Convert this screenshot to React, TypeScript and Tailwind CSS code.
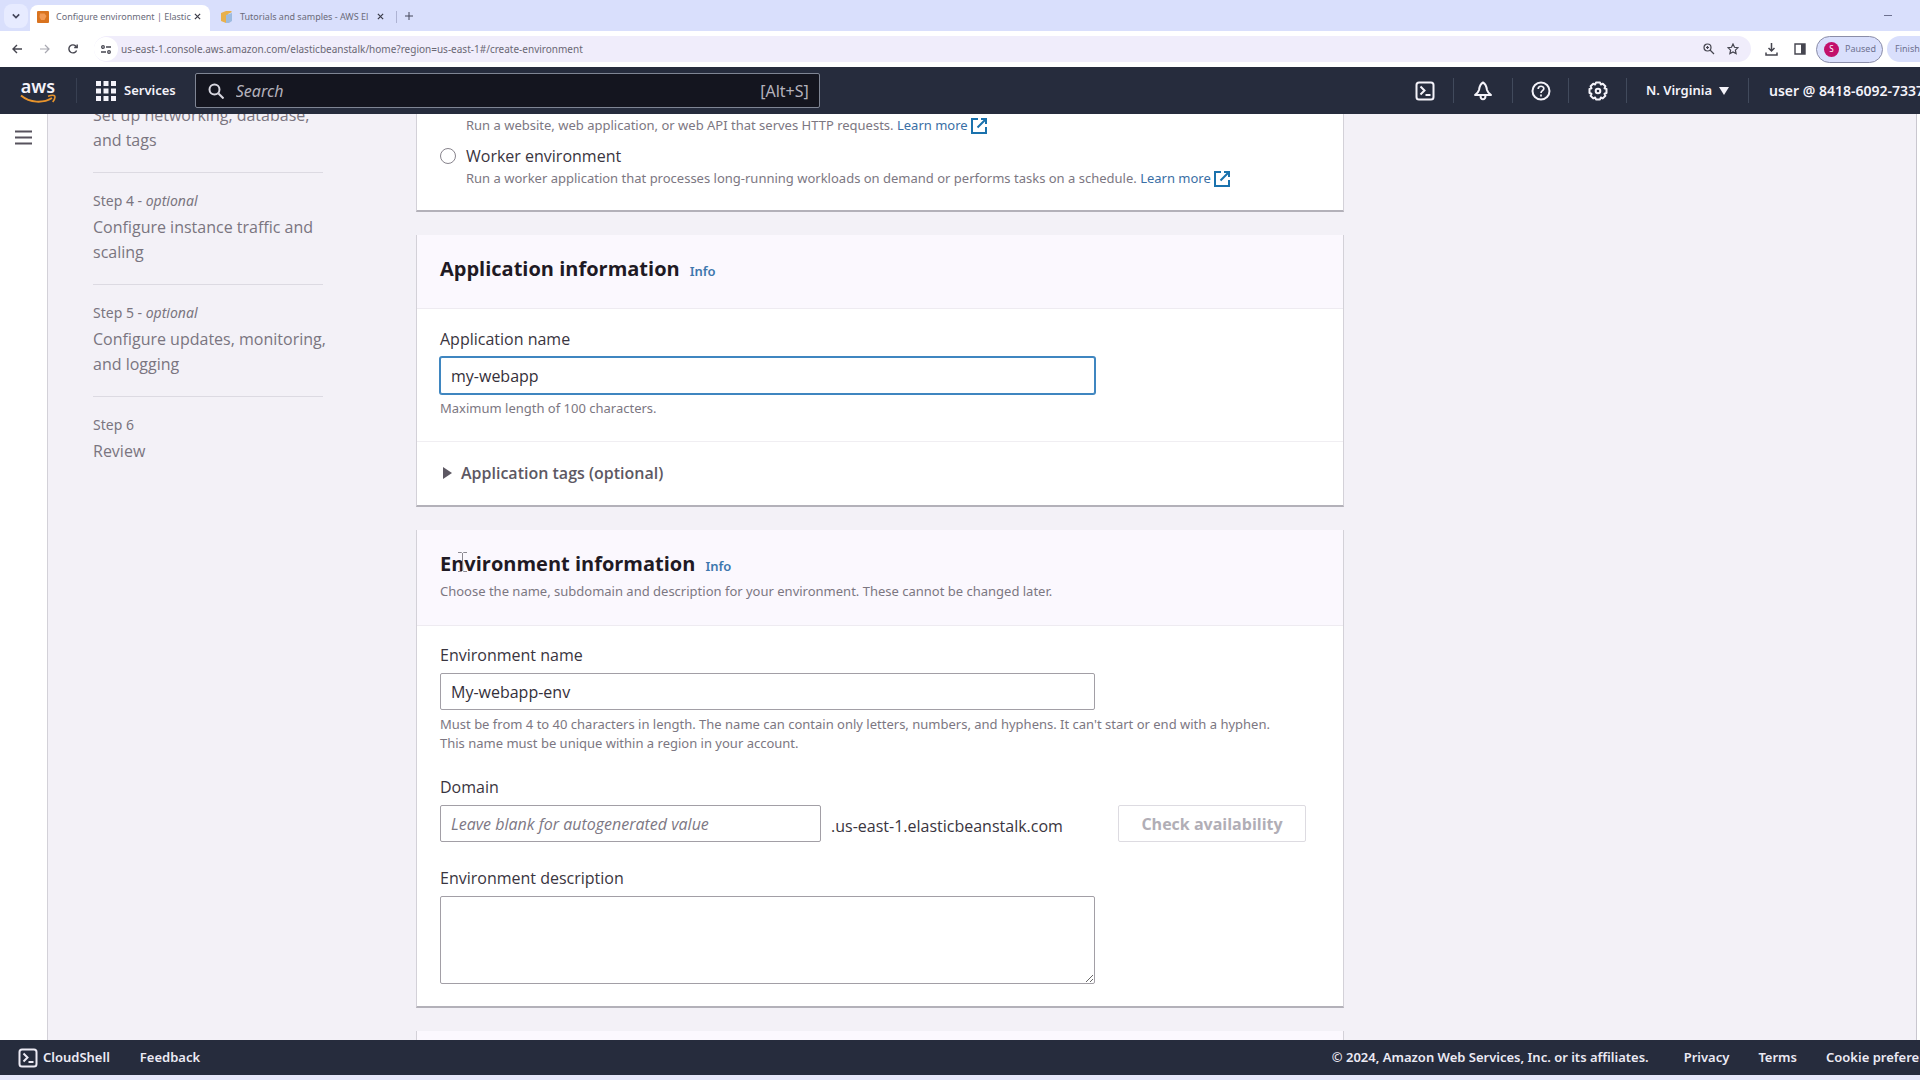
import type { ReactNode } from "react";

const STEPS = [
  { label: "Step 4", optional: true, title: "Configure instance traffic and scaling" },
  { label: "Step 5", optional: true, title: "Configure updates, monitoring, and logging" },
  { label: "Step 6", optional: false, title: "Review" },
];

const iconButton = "flex h-6 items-center justify-center";
const bodyText = "font-['Open_Sans','Noto_Sans',sans-serif] text-[16px]";
const fieldLabel = bodyText + " block leading-6 text-[#3a3540]";
const helpText = "text-[13px] leading-[19px] text-[#7c7782]";
const inputBox =
  bodyText + " block w-full rounded-xs border bg-white px-[10px] text-[#35303a] outline-none";

function CloseIcon() {
  return (
    <svg viewBox="0 0 8 8" className="h-[7px] w-[7px]" stroke="#3b3c4a" strokeWidth="1.4">
      <path d="m1 1 6 6M7 1 1 7" />
    </svg>
  );
}

function ExternalIcon() {
  return (
    <svg viewBox="0 0 16 16" className="inline-block h-4 w-4 align-text-bottom" fill="none" stroke="#1a72ad" strokeWidth="2">
      <path d="M10 1h5v5M15 1 6.500 9.500M7 1H1v14h14V9" />
    </svg>
  );
}

function TerminalIcon() {
  return (
    <svg viewBox="0 0 20 20" className="h-5 w-5" fill="none" stroke="currentColor" strokeWidth="2">
      <rect x="1.500" y="1.500" width="17" height="17" rx="2.500" />
      <path d="M5.500 5.500 9.500 9.500 5.500 13.500M10.500 14h5" />
    </svg>
  );
}

function AwsLogo() {
  return (
    <a href="#home" className="flex w-9 flex-col items-center">
      <span className="text-[18px] leading-4 font-semibold">aws</span>
      <svg viewBox="0 0 36 10" className="h-[10px] w-9" fill="none" stroke="#e8942c" strokeWidth="2">
        <path d="M1 1.500C10 9 23 9.500 32 4" />
        <path d="M28 2.200C31 1.200 34 1 34.700 2c.6 1.200-.4 4-2 6" strokeWidth="1.600" />
      </svg>
    </a>
  );
}

function BrowserTabs() {
  return (
    <div className="flex h-[31px] shrink-0 bg-[#d9dffc] pl-1 text-[9px] text-[#6a6b7a]">
      <button aria-label="Search tabs" className="mt-1 flex h-6 w-6 items-center justify-center rounded-lg bg-[#e7ebff]">
        <svg viewBox="0 0 10 10" className="h-2 w-2" fill="none" stroke="#44465a" strokeWidth="2">
          <path d="m1 3 4 4 4-4" />
        </svg>
      </button>
      <div className="mt-[5px] ml-[2px] flex w-[180px] items-center rounded-t-lg bg-white pr-[9px] pb-[3px] pl-[7px]">
        <svg viewBox="0 0 12 12" className="h-3 w-3 shrink-0">
          <rect width="12" height="12" rx="1" fill="#d9731f" />
          <path d="M3 2.500h4.500l2 2.500-2 4H4L2.500 6z" fill="#f29a55" />
        </svg>
        <span className="ml-[7px] flex-1 whitespace-nowrap">Configure environment | Elastic</span>
        <button aria-label="Close tab">
          <CloseIcon />
        </button>
      </div>
      <div className="mt-[5px] flex w-[187px] items-center pb-[3px] pl-[10px]">
        <svg viewBox="0 0 13 12" className="h-3 w-[13px] shrink-0">
          <path d="M1 2 6 0h5l1 1-4 2v8l-2 1-5-2z" fill="#e8b04c" />
          <path d="M6 4 12 2v8l-3 2H6z" fill="#9dbbe0" />
        </svg>
        <span className="ml-[7px] flex-1 whitespace-nowrap">Tutorials and samples - AWS El</span>
        <button aria-label="Close tab" className="mr-3">
          <CloseIcon />
        </button>
        <span className="h-3 border-r border-[#aeb3d3]" />
      </div>
      <button aria-label="New tab" className="ml-2">
        <svg viewBox="0 0 8 8" className="h-2 w-2" stroke="#44465a">
          <path d="M4 0v8M0 4h8" />
        </svg>
      </button>
      <button aria-label="Minimize" className="mr-7 ml-auto h-[1px] w-2 self-center bg-[#6d7190]" />
    </div>
  );
}

function AddressBar() {
  return (
    <div className="flex h-9 shrink-0 items-center overflow-hidden bg-white pl-3 text-[#45454f]">
      <button aria-label="Back">
        <svg viewBox="0 0 10 10" className="h-[10px] w-[10px]" fill="none" stroke="currentColor" strokeWidth="1.4">
          <path d="M5 1 1 5l4 4M1 5h9" />
        </svg>
      </button>
      <button aria-label="Forward" className="ml-[18px]">
        <svg viewBox="0 0 10 10" className="h-[10px] w-[10px]" fill="none" stroke="#a9a9b2" strokeWidth="1.200">
          <path d="m5 1 4 4-4 4M9 5H0" />
        </svg>
      </button>
      <button aria-label="Reload" className="ml-[18px]">
        <svg viewBox="0 0 10 10" className="h-[10px] w-[10px]" fill="none" stroke="currentColor" strokeWidth="1.400">
          <path d="M8.600 6.500A4 4 0 1 1 8.200 2.600M9.200.500v3h-3" />
        </svg>
      </button>
      <div className="ml-4 flex h-[26px] flex-1 items-center rounded-full bg-[#f0edfb] pr-3">
        <button aria-label="Site settings" className="flex h-6 w-6 items-center justify-center rounded-full bg-white">
          <svg viewBox="0 0 10 9" className="h-[9px] w-[10px]" fill="none" stroke="currentColor" strokeWidth="1.300">
            <circle cx="2" cy="2" r="1.300" />
            <circle cx="8" cy="7" r="1.300" />
            <path d="M5 2h5M0 7h5" />
          </svg>
        </button>
        <input
          aria-label="Address"
          readOnly
          value="us-east-1.console.aws.amazon.com/elasticbeanstalk/home?region=us-east-1#/create-environment"
          className="ml-[3px] flex-1 bg-transparent text-[10px] text-[#6a6874] outline-none"
        />
        <button aria-label="Zoom">
          <svg viewBox="0 0 12 12" className="h-3 w-3" fill="none" stroke="currentColor" strokeWidth="1.200">
            <circle cx="4.500" cy="4.500" r="3.500" />
            <path d="m7 7 4 4M4.500 3v3M3 4.500h3" />
          </svg>
        </button>
        <button aria-label="Bookmark" className="ml-3">
          <svg viewBox="0 0 12 12" className="h-3 w-3" fill="none" stroke="currentColor" strokeWidth="1.200">
            <path d="m6 1 1.500 3.300 3.500.400-2.600 2.400.700 3.500L6 8.900 2.900 10.600l.700-3.500L1 4.700l3.500-.400z" />
          </svg>
        </button>
      </div>
      <button aria-label="Downloads" className="ml-[14px]">
        <svg viewBox="0 0 13 13" className="h-[13px] w-[13px]" fill="none" stroke="currentColor" strokeWidth="1.500">
          <path d="M6.500 0v8M3.500 5l3 3 3-3M1 9.500V12h11V9.500" />
        </svg>
      </button>
      <button aria-label="Side panel" className="ml-4">
        <svg viewBox="0 0 12 12" className="h-3 w-3">
          <path d="M1 1h10v10H1z" fill="none" stroke="#45454f" strokeWidth="1.400" />
          <path d="M7 1h4v10H7z" fill="#45454f" />
        </svg>
      </button>
      <button className="ml-[10px] flex h-[27px] w-[67px] items-center gap-[6px] rounded-full border border-[#8a8da8] bg-[#d9dffc] pl-[7px] text-[9px] text-[#6d7190]">
        <span className="flex h-[15px] w-[15px] items-center justify-center rounded-full bg-[#c2106b] text-[8px] text-white">S</span>
        Paused
      </button>
      <button className="ml-1 h-[26px] w-[33px] overflow-hidden rounded-l-full bg-[#d9dffc] pl-2 text-left text-[9px] text-[#6d7190]">
        Finish
      </button>
    </div>
  );
}

function NavDivider() {
  return <span className="h-[25px] w-px bg-[#414a5c]" />;
}

function TopNav() {
  return (
    <nav className="flex h-[47px] shrink-0 items-center overflow-hidden bg-[#262c3d] pl-5 text-[#f4f3fa]">
      <AwsLogo />
      <span className="ml-5 h-[25px] w-px bg-[#384052]" />
      <button className="ml-[19px] flex items-center gap-2 text-[13px] font-semibold">
        <svg viewBox="0 0 20 20" className="h-5 w-5" fill="currentColor">
          <path d="M0 0h5v5H0zM7.500 0h5v5h-5zM15 0h5v5h-5zM0 7.500h5v5H0zM7.500 7.500h5v5h-5zM15 7.500h5v5h-5zM0 15h5v5H0zM7.500 15h5v5h-5zM15 15h5v5h-5z" />
        </svg>
        Services
      </button>
      <label className="ml-[19px] flex h-[35px] w-[625px] items-center rounded-xs border border-[#7f8594] bg-[#14151f] pr-[10px] pl-3">
        <svg viewBox="0 0 16 16" className="h-4 w-4" fill="none" stroke="#d8d7e0" strokeWidth="2">
          <circle cx="6.500" cy="6.500" r="5" />
          <path d="m10.500 10.500 5 5" />
        </svg>
        <input
          aria-label="Search"
          placeholder="Search"
          className="ml-3 flex-1 bg-transparent text-[16px] italic outline-none placeholder:text-[#b4b2bc]"
        />
        <span className="text-[16px] text-[#b4b2bc]">[Alt+S]</span>
      </label>
      <div className="ml-auto flex items-center">
        <button aria-label="CloudShell" className={iconButton + " w-[56px]"}>
          <TerminalIcon />
        </button>
        <NavDivider />
        <button aria-label="Notifications" className={iconButton + " w-[58px]"}>
          <svg viewBox="0 0 20 20" className="h-5 w-5" fill="none" stroke="currentColor" strokeWidth="2" strokeLinejoin="round">
            <path d="M10 1.500C7 3 6.500 5.500 6 9c-.5 2-2 3.500-4 5h16c-2-1.500-3.500-3-4-5-.5-3.500-1-6-4-7.500z" />
            <path d="M7.500 14.500c0 5 5 5 5 0" />
          </svg>
        </button>
        <NavDivider />
        <button aria-label="Help" className={iconButton + " w-[55px]"}>
          <svg viewBox="0 0 20 20" className="h-5 w-5" fill="none" stroke="currentColor" strokeWidth="2">
            <circle cx="10" cy="10" r="8.500" />
            <path d="M7.200 8c0-3.600 5.600-3.600 5.600-.300 0 2-2.800 2-2.800 4.300M10 13.500v2" strokeWidth="1.700" />
          </svg>
        </button>
        <NavDivider />
        <button aria-label="Settings" className={iconButton + " w-[57px]"}>
          <svg viewBox="0 0 20 20" className="h-5 w-5" fill="none" stroke="currentColor" strokeWidth="2" strokeLinejoin="round">
            <path d="M8 1.500h4l.8 2 2-.8 2.600 2.600-.9 2 2 .7v4l-2 .8.9 2-2.600 2.600-2-.9-.8 2H8l-.8-2-2 .9-2.600-2.600.9-2-2-.8V8l2-.700-.9-2 2.600-2.600 2 .800z" />
            <circle cx="10" cy="10" r="2.300" />
          </svg>
        </button>
        <NavDivider />
        <button className="flex w-[121px] items-center justify-center gap-[7px] text-[13px] font-semibold whitespace-nowrap">
          N. Virginia
          <svg viewBox="0 0 10 8" className="h-2 w-[10px]" fill="currentColor">
            <path d="M0 0h10L5 8z" />
          </svg>
        </button>
        <NavDivider />
        <button className="ml-5 w-[151px] overflow-hidden text-left text-[14px] font-semibold whitespace-nowrap">
          user @ 8418-6092-7337
        </button>
      </div>
    </nav>
  );
}

function Steps() {
  return (
    <ol className="-mt-[11px] w-[230px] shrink-0 text-[#7a7580]">
      <li className={bodyText + " border-b border-[#dcdae2] pb-[19px] leading-[25px]"}>
        Set up networking, database, and tags
      </li>
      {STEPS.map((step) => (
        <li key={step.label} className="border-b border-[#dcdae2] pt-4 pb-[19px] last:border-0">
          <p className="text-[14px] leading-6">
            {step.label}
            {step.optional && (
              <>
                {" "}
                - <i>optional</i>
              </>
            )}
          </p>
          <p className={bodyText + " -mr-3 mt-[2px] leading-[25px]"}>{step.title}</p>
        </li>
      ))}
    </ol>
  );
}

function Card({ children }: { children: ReactNode }) {
  return (
    <section className="border border-t-0 border-b-2 border-[#d3d1d8] border-b-[#b3b1b9] bg-white">{children}</section>
  );
}

function CardHeader({ title, description }: { title: string; description?: string }) {
  return (
    <header className="border-b border-[#eeebf1] bg-[#fbf8fe] px-[23px] pt-[19px] pb-6">
      <div className="flex items-baseline gap-[10px]">
        <h2 className="font-['Open_Sans','Noto_Sans',sans-serif] text-[20px] leading-[30px] font-bold text-[#1f1a24]">
          {title}
        </h2>
        <a href="#info" className="text-[13px] font-semibold text-[#3d77ad]">
          Info
        </a>
      </div>
      {description && <p className={helpText + " mt-[3px]"}>{description}</p>}
    </header>
  );
}

function LearnMore() {
  return (
    <a href="#learn" className="whitespace-nowrap text-[#3a6fa5]">
      Learn more <ExternalIcon />
    </a>
  );
}

export default function App() {
  return (
    <div className="flex h-screen flex-col overflow-hidden bg-[#e6e8fa] font-['Noto_Sans','Open_Sans',sans-serif]">
      <BrowserTabs />
      <AddressBar />
      <TopNav />

      <div className="flex min-h-0 flex-1 overflow-hidden bg-white">
        <aside className="w-12 shrink-0 border-r border-[#d3d1d8] pt-4 pl-[15px]">
          <button aria-label="Open navigation" className="block">
            <svg viewBox="0 0 17 15" className="h-[15px] w-[17px]" stroke="#57525d" strokeWidth="2">
              <path d="M0 1.500h17M0 7.500h17M0 13.500h17" />
            </svg>
          </button>
        </aside>

        <main className="mr-[3px] flex flex-1 gap-[93px] border-r border-[#c9c7cf] bg-[#f3f1f7] pl-[45px]">
          <Steps />

          <div className="flex w-full max-w-[928px] flex-col gap-[23px]">
            {/* Environment tier */}
            <Card>
              <div className="px-[23px] pb-[22px]">
                <p className={helpText + " ml-[26px] pt-[2px]"}>
                  Run a website, web application, or web API that serves HTTP requests. <LearnMore />
                </p>
                <div className="mt-[9px] flex gap-[10px]">
                  <input
                    id="worker"
                    type="radio"
                    name="tier"
                    className="mt-1 h-4 w-4 shrink-0 appearance-none rounded-full border border-[#87838c]"
                  />
                  <div>
                    <label htmlFor="worker" className={fieldLabel}>
                      Worker environment
                    </label>
                    <p className={helpText + " mt-px"}>
                      Run a worker application that processes long-running workloads on demand or performs tasks on a schedule.{" "}
                      <LearnMore />
                    </p>
                  </div>
                </div>
              </div>
            </Card>

            {/* Application information */}
            <Card>
              <CardHeader title="Application information" />
              <div className="grid grid-cols-12 gap-5 px-[23px] pt-[18px] pb-[23px]">
                <div className="col-span-9">
                  <label htmlFor="app-name" className={fieldLabel}>
                    Application name
                  </label>
                  <input
                    id="app-name"
                    defaultValue="my-webapp"
                    className={inputBox + " mt-[6px] mb-[5px] h-[37px] border-[#3f86c0] ring-1 ring-[#3f86c0]"}
                  />
                  <p className={helpText}>Maximum length of 100 characters.</p>
                </div>
              </div>
              <div className="border-t border-[#f0eef2] px-[23px] pt-[18px] pb-[19px]">
                <button
                  className={bodyText + " flex items-center gap-[9px] pl-[3px] leading-[26px] font-semibold text-[#5d5863]"}
                >
                  <svg viewBox="0 0 9 12" className="h-3 w-[9px]" fill="currentColor">
                    <path d="M0 0v12l9-6z" />
                  </svg>
                  Application tags (optional)
                </button>
              </div>
            </Card>

            {/* Environment information */}
            <Card>
              <CardHeader
                title="Environment information"
                description="Choose the name, subdomain and description for your environment. These cannot be changed later."
              />
              <div className="px-[23px] pt-[17px] pb-[22px]">
                <div className="grid grid-cols-12 gap-x-5">
                  <div className="col-span-9">
                    <label htmlFor="env-name" className={fieldLabel}>
                      Environment name
                    </label>
                    <input
                      id="env-name"
                      defaultValue="My-webapp-env"
                      className={inputBox + " mt-[6px] mb-[5px] h-[37px] border-[#a29fa6]"}
                    />
                  </div>
                  <p className={helpText + " col-span-12"}>
                    Must be from 4 to 40 characters in length. The name can contain only letters, numbers, and hyphens. It can't
                    start or end with a hyphen.
                    <br />
                    This name must be unique within a region in your account.
                  </p>
                </div>

                <label htmlFor="domain" className={fieldLabel + " mt-[22px]"}>
                  Domain
                </label>
                <div className="mt-[6px] flex items-center">
                  <div className="w-[381px]">
                    <input
                      id="domain"
                      placeholder="Leave blank for autogenerated value"
                      className={inputBox + " h-[37px] border-[#a29fa6] placeholder:text-[#7d7884] placeholder:italic"}
                    />
                  </div>
                  <span className={bodyText + " mt-1 ml-[10px] w-[287px] text-[#3a3540]"}>.us-east-1.elasticbeanstalk.com</span>
                  <button className={bodyText + " h-[37px] w-[188px] rounded-xs border border-[#dddbe1] font-bold text-[#b1aeb6]"}>
                    Check availability
                  </button>
                </div>

                <div className="mt-6 grid grid-cols-12 gap-x-5">
                  <div className="col-span-9">
                    <label htmlFor="env-description" className={fieldLabel}>
                      Environment description
                    </label>
                    <textarea id="env-description" className={inputBox + " mt-[6px] h-[88px] border-[#a29fa6]"} />
                  </div>
                </div>
              </div>
            </Card>

            <Card>
              <div className="h-12 bg-[#fbf8fe]" />
            </Card>
          </div>
        </main>
      </div>

      <footer className="mb-[5px] flex h-[35px] shrink-0 items-center overflow-hidden bg-[#262c3d] pl-[18px] text-[13px] font-semibold whitespace-nowrap text-[#eceaf4]">
        <button className="flex items-center gap-[5px]">
          <TerminalIcon />
          CloudShell
        </button>
        <button className="ml-[30px]">Feedback</button>
        <span className="mr-[35px] ml-auto">© 2024, Amazon Web Services, Inc. or its affiliates.</span>
        <a href="#privacy" className="mr-[29px]">
          Privacy
        </a>
        <a href="#terms" className="mr-[29px]">
          Terms
        </a>
        <a href="#cookies" className="w-[94px] overflow-hidden">
          Cookie preferences
        </a>
      </footer>

      {/* Text pointer resting over the heading */}
      <svg viewBox="0 0 9 20" className="pointer-events-none absolute top-[552px] left-[458px] h-5 w-[9px]" fill="none" stroke="#8b8890">
        <path d="M0 .500h3.500l1 1 1-1H9M4.500 1v18M0 19.500h3.500l1-1 1 1H9" />
      </svg>
    </div>
  );
}
